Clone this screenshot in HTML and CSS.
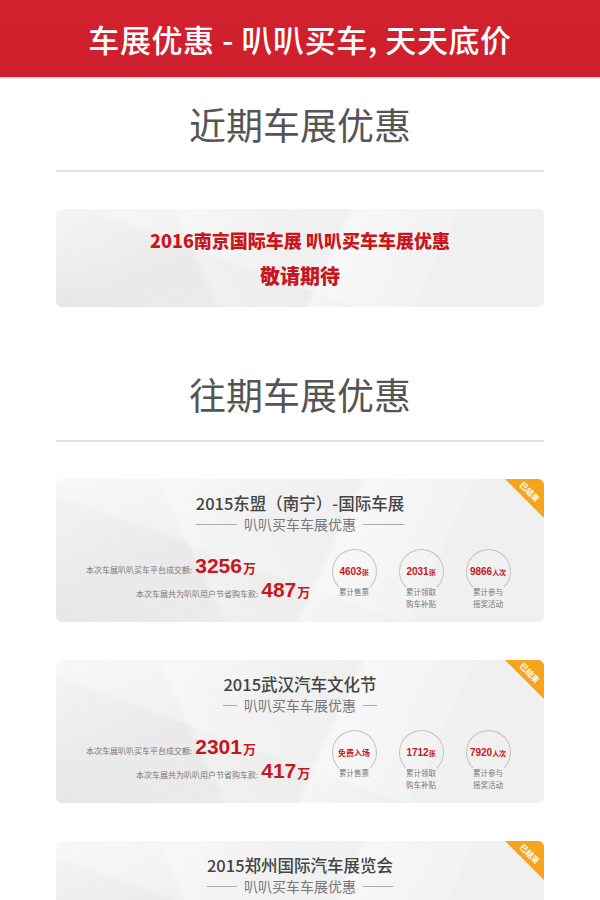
FILE: index.html
```html
<!DOCTYPE html>
<html lang="zh-CN">
<head>
<meta charset="utf-8">
<title>车展优惠</title>
<link rel="stylesheet" href="styles.css">
</head>
<body>
<header class="topbar"><h1 class="topbar-title">车展优惠 - 叭叭买车, 天天底价</h1></header>

<section class="section">
  <h2 class="section-title">近期车展优惠</h2>
  <div class="divider"></div>
  <div class="card card-upcoming">
    <p class="upcoming-line">2016南京国际车展 叭叭买车车展优惠</p>
    <p class="upcoming-line">敬请期待</p>
  </div>
</section>

<section class="section section-past">
  <h2 class="section-title">往期车展优惠</h2>
  <div class="divider"></div>

  <div class="card card-past">
    <span class="ribbon"><span class="ribbon-text">已结束</span></span>
    <div class="heading-wrap">
      <div class="card-title">2015东盟（南宁）-国际车展</div>
      <div class="card-sub"><span class="sub-line"></span><span>叭叭买车车展优惠</span><span class="sub-line"></span></div>
    </div>
    <div class="stats">
      <div class="totals">
        <div class="total-row"><span class="total-label">本次车展叭叭买车平台成交额:</span><span class="total-num">3256<small>万</small></span></div>
        <div class="total-row total-row-2"><span class="total-label">本次车展共为叭叭用户节省购车款:</span><span class="total-num">487<small>万</small></span></div>
      </div>
      <div class="rings">
        <div class="ring-item"><div class="ring"><span class="ring-num">4603<small>张</small></span></div><div class="ring-label">累计售票</div></div>
        <div class="ring-item"><div class="ring"><span class="ring-num">2031<small>张</small></span></div><div class="ring-label">累计领取<br>购车补贴</div></div>
        <div class="ring-item"><div class="ring"><span class="ring-num">9866<small>人次</small></span></div><div class="ring-label">累计参与<br>摇奖活动</div></div>
      </div>
    </div>
  </div>

  <div class="card card-past">
    <span class="ribbon"><span class="ribbon-text">已结束</span></span>
    <div class="heading-wrap">
      <div class="card-title">2015武汉汽车文化节</div>
      <div class="card-sub"><span class="sub-line"></span><span>叭叭买车车展优惠</span><span class="sub-line"></span></div>
    </div>
    <div class="stats">
      <div class="totals">
        <div class="total-row"><span class="total-label">本次车展叭叭买车平台成交额:</span><span class="total-num">2301<small>万</small></span></div>
        <div class="total-row total-row-2"><span class="total-label">本次车展共为叭叭用户节省购车款:</span><span class="total-num">417<small>万</small></span></div>
      </div>
      <div class="rings">
        <div class="ring-item"><div class="ring"><span class="ring-num ring-num-text">免费入场</span></div><div class="ring-label">累计售票</div></div>
        <div class="ring-item"><div class="ring"><span class="ring-num">1712<small>张</small></span></div><div class="ring-label">累计领取<br>购车补贴</div></div>
        <div class="ring-item"><div class="ring"><span class="ring-num">7920<small>人次</small></span></div><div class="ring-label">累计参与<br>摇奖活动</div></div>
      </div>
    </div>
  </div>

  <div class="card card-past">
    <span class="ribbon"><span class="ribbon-text">已结束</span></span>
    <div class="heading-wrap">
      <div class="card-title">2015郑州国际汽车展览会</div>
      <div class="card-sub"><span class="sub-line"></span><span>叭叭买车车展优惠</span><span class="sub-line"></span></div>
    </div>
    <div class="stats">
      <div class="totals">
        <div class="total-row"><span class="total-label">本次车展叭叭买车平台成交额:</span><span class="total-num">1850<small>万</small></span></div>
        <div class="total-row total-row-2"><span class="total-label">本次车展共为叭叭用户节省购车款:</span><span class="total-num">326<small>万</small></span></div>
      </div>
      <div class="rings">
        <div class="ring-item"><div class="ring"><span class="ring-num">3210<small>张</small></span></div><div class="ring-label">累计售票</div></div>
        <div class="ring-item"><div class="ring"><span class="ring-num">1506<small>张</small></span></div><div class="ring-label">累计领取<br>购车补贴</div></div>
        <div class="ring-item"><div class="ring"><span class="ring-num">6408<small>人次</small></span></div><div class="ring-label">累计参与<br>摇奖活动</div></div>
      </div>
    </div>
  </div>
</section>
</body>
</html>
```

FILE: styles.css
```css
* { box-sizing: border-box; }
html, body { margin: 0; padding: 0; background: #fff; }
body {
  font-family: "Noto Sans CJK SC", "Noto Sans", "Liberation Sans", sans-serif;
  color: #444;
}
.topbar {
  height: 77px;
  background: linear-gradient(180deg, #d2212e 0%, #cf1f2c 100%);
  display: flex;
  align-items: center;
  justify-content: center;
  box-shadow: 0 1px 2px rgba(0,0,0,0.25);
  position: relative;
}
.topbar-title {
  margin: 0;
  color: #fff;
  font-size: 31px;
  font-weight: 500;
  line-height: 1;
  letter-spacing: 0.6px;
}
.section { padding: 25px 56px 0; }
.section-past { padding-top: 65px; padding-bottom: 40px; }
.section-title {
  margin: 0;
  text-align: center;
  font-size: 37px;
  line-height: 44px;
  font-weight: 400;
  color: #555;
}
.divider {
  height: 2px;
  background: #e1e1e1;
  margin: 24px 0 37px;
}
.card {
  position: relative;
  border-radius: 6px;
  overflow: hidden;
  background-color: #f0f0f0;
  background-image:
    linear-gradient(160deg, rgba(255,255,255,0.55) 0%, rgba(255,255,255,0) 35%),
    linear-gradient(25deg, rgba(0,0,0,0.04) 0%, rgba(0,0,0,0) 40%),
    linear-gradient(115deg, rgba(255,255,255,0) 55%, rgba(255,255,255,0.5) 56%, rgba(255,255,255,0.2) 75%, rgba(255,255,255,0) 76%),
    linear-gradient(65deg, rgba(255,255,255,0) 30%, rgba(255,255,255,0.35) 31%, rgba(255,255,255,0) 52%),
    linear-gradient(200deg, rgba(0,0,0,0) 60%, rgba(0,0,0,0.025) 61%, rgba(0,0,0,0) 85%);
}
.card-upcoming {
  height: 98px;
  display: flex;
  flex-direction: column;
  align-items: center;
  justify-content: center;
  gap: 10px;
}
.upcoming-line {
  margin: 0;
  color: #c8161e;
  font-size: 18px;
  font-weight: 900;
  line-height: 26px;
}
.upcoming-line + .upcoming-line { font-size: 20px; }
.card-past {
  padding: 12px 0 12px;
  margin-bottom: 38px;
  text-align: center;
}
.heading-wrap {
  display: inline-grid;
  grid-template-columns: auto;
}
.card-title {
  font-size: 16.5px;
  line-height: 22px;
  font-weight: 500;
  color: #444;
}
.card-sub {
  display: flex;
  align-items: center;
  gap: 7px;
  font-size: 14px;
  line-height: 20px;
  color: #777;
}
.sub-line { flex: 1; height: 1px; background: #aaa; }
.ribbon {
  position: absolute;
  top: 0;
  right: 0;
  width: 39px;
  height: 39px;
  background: #f5a41c;
  clip-path: polygon(0 0, 100% 0, 100% 100%);
}
.ribbon-text {
  position: absolute;
  top: 8px;
  right: -3px;
  width: 34px;
  font-size: 8px;
  font-weight: 700;
  line-height: 9px;
  color: #fff;
  transform: rotate(45deg);
  text-align: center;
}
.stats {
  display: flex;
  align-items: flex-start;
  margin-top: 15px;
  padding-left: 30px;
  text-align: left;
}
.totals {
  width: 246px;
  margin-top: 5px;
  display: flex;
  flex-direction: column;
}
.total-row {
  display: flex;
  align-items: baseline;
  height: 24px;
  line-height: 24px;
}
.total-row-2 { margin-left: 50px; }
.total-label {
  font-size: 8px;
  color: #777;
  margin-right: 3px;
  white-space: nowrap;
}
.total-num {
  font-family: "Liberation Sans", Arial, sans-serif;
  font-weight: 700;
  font-size: 21px;
  color: #c8161e;
  white-space: nowrap;
}
.total-num small {
  font-family: "Noto Sans CJK SC", sans-serif;
  font-size: 13px;
  font-weight: 700;
  margin-left: 1px;
}
.rings {
  display: flex;
  gap: 23px;
}
.ring-item {
  width: 44px;
  display: flex;
  flex-direction: column;
  align-items: center;
}
.ring {
  width: 45px;
  height: 45px;
  border-radius: 50%;
  border: 1px solid #c2c2c2;
  border-bottom-color: transparent;
  display: flex;
  align-items: center;
  justify-content: center;
}
.ring-num {
  font-family: "Liberation Sans", Arial, sans-serif;
  font-weight: 700;
  font-size: 10px;
  color: #c8161e;
  white-space: nowrap;
  line-height: 1;
}
.ring-num small {
  font-family: "Noto Sans CJK SC", sans-serif;
  font-size: 7px;
  font-weight: 700;
}
.ring-num-text {
  font-family: "Noto Sans CJK SC", sans-serif;
  font-size: 8px;
}
.ring-label {
  margin-top: -8px;
  font-size: 7.5px;
  line-height: 12px;
  color: #777;
  text-align: center;
  white-space: nowrap;
}
```
